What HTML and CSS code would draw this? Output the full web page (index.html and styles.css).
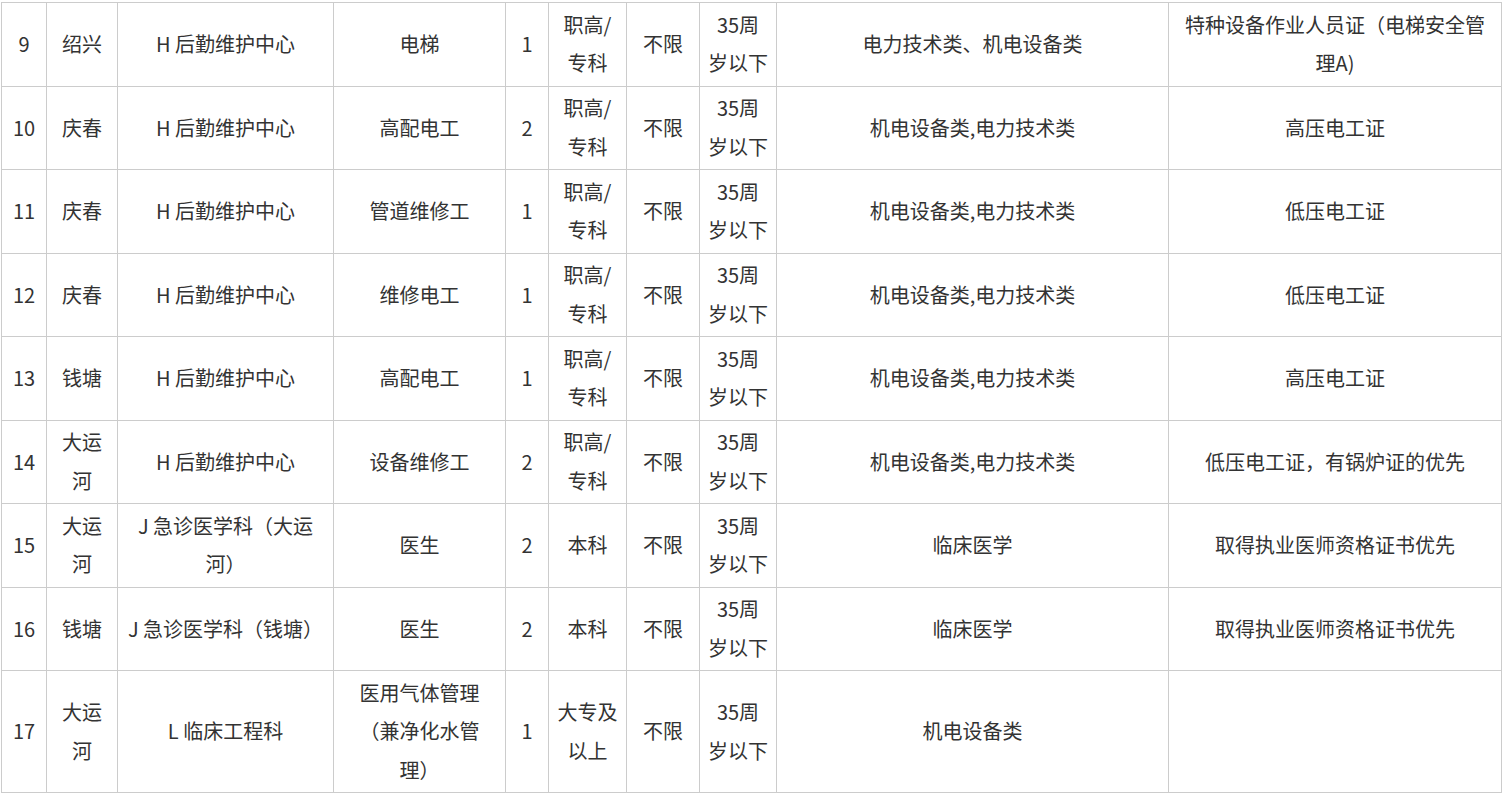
FILE: index.html
```html
<!DOCTYPE html>
<html lang="zh-CN">
<head>
<meta charset="utf-8">
<title>招聘岗位</title>
<link rel="stylesheet" href="styles.css">
</head>
<body>
<div class="wrap">
<table class="jobs">
<colgroup>
<col class="c1"><col class="c2"><col class="c3"><col class="c4"><col class="c5">
<col class="c6"><col class="c7"><col class="c8"><col class="c9"><col class="c10">
</colgroup>
<tbody>
<tr><td>9</td><td>绍兴</td><td>H 后勤维护中心</td><td>电梯</td><td>1</td><td>职高/专科</td><td>不限</td><td>35周岁以下</td><td>电力技术类、机电设备类</td><td>特种设备作业人员证（电梯安全管理A)</td></tr>
<tr><td>10</td><td>庆春</td><td>H 后勤维护中心</td><td>高配电工</td><td>2</td><td>职高/专科</td><td>不限</td><td>35周岁以下</td><td>机电设备类,电力技术类</td><td>高压电工证</td></tr>
<tr><td>11</td><td>庆春</td><td>H 后勤维护中心</td><td>管道维修工</td><td>1</td><td>职高/专科</td><td>不限</td><td>35周岁以下</td><td>机电设备类,电力技术类</td><td>低压电工证</td></tr>
<tr><td>12</td><td>庆春</td><td>H 后勤维护中心</td><td>维修电工</td><td>1</td><td>职高/专科</td><td>不限</td><td>35周岁以下</td><td>机电设备类,电力技术类</td><td>低压电工证</td></tr>
<tr><td>13</td><td>钱塘</td><td>H 后勤维护中心</td><td>高配电工</td><td>1</td><td>职高/专科</td><td>不限</td><td>35周岁以下</td><td>机电设备类,电力技术类</td><td>高压电工证</td></tr>
<tr><td>14</td><td>大运河</td><td>H 后勤维护中心</td><td>设备维修工</td><td>2</td><td>职高/专科</td><td>不限</td><td>35周岁以下</td><td>机电设备类,电力技术类</td><td>低压电工证，有锅炉证的优先</td></tr>
<tr><td>15</td><td>大运河</td><td>J 急诊医学科（大运河）</td><td>医生</td><td>2</td><td>本科</td><td>不限</td><td>35周岁以下</td><td>临床医学</td><td>取得执业医师资格证书优先</td></tr>
<tr><td>16</td><td>钱塘</td><td>J 急诊医学科（钱塘）</td><td>医生</td><td>2</td><td>本科</td><td>不限</td><td>35周岁以下</td><td>临床医学</td><td>取得执业医师资格证书优先</td></tr>
<tr><td>17</td><td>大运河</td><td>L 临床工程科</td><td>医用气体管理（兼净化水管理）</td><td>1</td><td>大专及以上</td><td>不限</td><td>35周岁以下</td><td>机电设备类</td><td></td></tr>
</tbody>
</table>
</div>
</body>
</html>
```

FILE: styles.css
```css
html, body {
  margin: 0;
  padding: 0;
  background: #fff;
}
.wrap {
  padding: 2px 0 0 1px;
}
.jobs {
  border-collapse: collapse;
  table-layout: fixed;
  width: 1500px;
  font-family: "Noto Sans CJK SC", "Noto Sans", sans-serif;
  font-size: 20px;
  line-height: 38.5px;
  color: #333;
  text-spacing-trim: space-all;
}
.jobs td {
  border: 1px solid #ccc;
  padding: 2.75px 7.5px;
  text-align: center;
  vertical-align: middle;
  word-break: normal;
}
.c1 { width: 45px; }
.c2 { width: 71px; }
.c3 { width: 216px; }
.c4 { width: 172px; }
.c5 { width: 43px; }
.c6 { width: 78px; }
.c7 { width: 73px; }
.c8 { width: 77px; }
.c9 { width: 392px; }
.c10 { width: 333px; }
```
